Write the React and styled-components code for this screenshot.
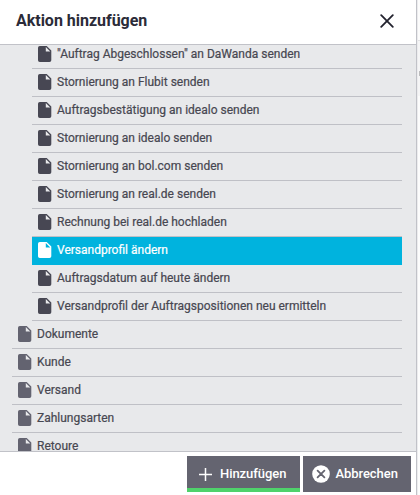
import React from 'react';
import styled, { createGlobalStyle } from 'styled-components';

const GlobalStyle = createGlobalStyle`
  *, *::before, *::after { box-sizing: border-box; }
  body { margin: 0; background: #f9f9fa; overflow: hidden; font-family: Roboto, sans-serif; color: #44444f; }
`;

const Page = styled.div`
  display: flex;
  height: 495px;
  overflow: hidden;
`;

const Dialog = styled.section`
  display: flex;
  flex: none;
  flex-direction: column;
  width: 417px;
  background: #fff;
  border-right: 1px solid #c1c2c8;
`;

const Backdrop = styled.div`
  flex: 1;
  background: #fcfcfc;
  border-left: 1px solid #ececee;
`;

const BackdropHeader = styled.div`
  height: 41px;
  border-bottom: 1px solid #e2e2e4;
`;

const BackdropBar = styled.div`
  display: flex;
  align-items: center;
  justify-content: flex-end;
  height: 55px;
  padding-top: 9px;
  background: #f5f5f6;
`;

const BackdropMark = styled.span`
  width: 1px;
  height: 5px;
  background: #bcbcbe;
`;

const Header = styled.header`
  display: flex;
  flex: none;
  align-items: center;
  justify-content: space-between;
  height: 45px;
  padding: 0 22px 3px 16px;
  border-bottom: 1px solid #c1c2c8;
`;

const Title = styled.h1`
  margin: 0;
  font-size: 16px;
  line-height: 20px;
  font-weight: 700;
  letter-spacing: -0.02px;
  color: #2b2b38;
`;

const CloseButton = styled.button`
  display: flex;
  padding: 0;
  border: 0;
  background: none;
  color: #22222e;
`;

const List = styled.ul`
  flex: none;
  height: 407px;
  margin: 0;
  padding: 0 14px 0 12px;
  list-style: none;
  overflow: hidden;
  background: #e8e9eb;
  border-bottom: 1px solid #c1c2c8;
`;

const Row = styled.li`
  display: flex;
  align-items: center;
  gap: 5px;
  height: 28px;
  margin-left: ${({ $nested }) => ($nested ? 20 : 0)}px;
  padding: 0 6px 1px;
  font-size: 12px;
  font-weight: 400;
  line-height: 16px;
  white-space: nowrap;
  -webkit-text-stroke: 0.2px currentColor;
  color: ${({ $selected }) => ($selected ? '#fff' : '#474751')};
  background: ${({ $selected }) => ($selected ? '#00b3de' : 'transparent')};
  border-bottom: 1px solid ${({ $selected }) => ($selected ? '#00b3de' : '#bfc0c6')};

  &:first-child { margin-top: -4px; }

  svg {
    color: ${({ $selected, $nested }) => ($selected ? '#fff' : $nested ? '#474753' : '#636370')};
  }
`;

const Footer = styled.footer`
  display: flex;
  justify-content: flex-end;
  gap: 3px;
  padding: 4px 5px 0 0;
`;

const Action = styled.button`
  display: flex;
  align-items: center;
  width: ${({ $width }) => $width}px;
  height: 36px;
  padding: 0 0 0 ${({ $inset }) => $inset}px;
  gap: ${({ $gap }) => $gap}px;
  border: 0;
  box-shadow: ${({ $primary }) => ($primary ? 'inset 0 -4px #4fd26b' : 'none')};
  background: #646470;
  color: #fff;
  font: 500 13px/18px Roboto, sans-serif;
  letter-spacing: -0.06px;
`;

const FileIcon = () => (
  <svg width="14" height="16" viewBox="0 0 14 16" aria-hidden="true">
    <path fill="currentColor" fillRule="evenodd" d="M1.8 0h6.9l4.6 4.6v9.6a1.8 1.8 0 0 1-1.8 1.8H1.8A1.8 1.8 0 0 1 0 14.2V1.8A1.8 1.8 0 0 1 1.8 0Zm6 1.1v4.5h4.5Z" />
  </svg>
);

const CloseIcon = () => (
  <svg width="14" height="14" viewBox="0 0 14 14" aria-hidden="true">
    <path d="M1.2 1.2 12.8 12.8M12.8 1.2 1.2 12.8" stroke="currentColor" strokeWidth="1.8" strokeLinecap="round" />
  </svg>
);

const PlusIcon = () => (
  <svg width="13" height="13" viewBox="0 0 13 13" aria-hidden="true">
    <path d="M6.5 0v13M0 6.5h13" stroke="currentColor" strokeWidth="1.5" />
  </svg>
);

const CancelIcon = () => (
  <svg width="18" height="18" viewBox="0 0 18 18" aria-hidden="true">
    <circle cx="9" cy="9" r="8.8" fill="currentColor" />
    <path d="m5.6 5.6 6.8 6.8m0-6.8-6.8 6.8" stroke="#646470" strokeWidth="1.8" strokeLinecap="round" />
  </svg>
);

const rows = [
  { label: '"Auftrag Abgeschlossen" an DaWanda senden', nested: true },
  { label: 'Stornierung an Flubit senden', nested: true },
  { label: 'Auftragsbestätigung an idealo senden', nested: true },
  { label: 'Stornierung an idealo senden', nested: true },
  { label: 'Stornierung an bol.com senden', nested: true },
  { label: 'Stornierung an real.de senden', nested: true },
  { label: 'Rechnung bei real.de hochladen', nested: true },
  { label: 'Versandprofil ändern', nested: true, selected: true },
  { label: 'Auftragsdatum auf heute ändern', nested: true },
  { label: 'Versandprofil der Auftragspositionen neu ermitteln', nested: true },
  { label: 'Dokumente' },
  { label: 'Kunde' },
  { label: 'Versand' },
  { label: 'Zahlungsarten' },
  { label: 'Retoure' },
];

export default function App() {
  return (
    <Page>
      <GlobalStyle />
      <Dialog>
        <Header>
          <Title>Aktion hinzufügen</Title>
          <CloseButton aria-label="Schließen"><CloseIcon /></CloseButton>
        </Header>
        <List>
          {rows.map(({ label, nested, selected }) => (
            <Row key={label} $nested={nested} $selected={selected}>
              <FileIcon />
              <span>{label}</span>
            </Row>
          ))}
        </List>
        <Footer>
          <Action $primary $width={113} $inset={12} $gap={8}><PlusIcon />Hinzufügen</Action>
          <Action $width={108} $inset={9} $gap={5.5}><CancelIcon />Abbrechen</Action>
        </Footer>
      </Dialog>
      <Backdrop>
        <BackdropHeader />
        <BackdropBar><BackdropMark /></BackdropBar>
      </Backdrop>
    </Page>
  );
}
